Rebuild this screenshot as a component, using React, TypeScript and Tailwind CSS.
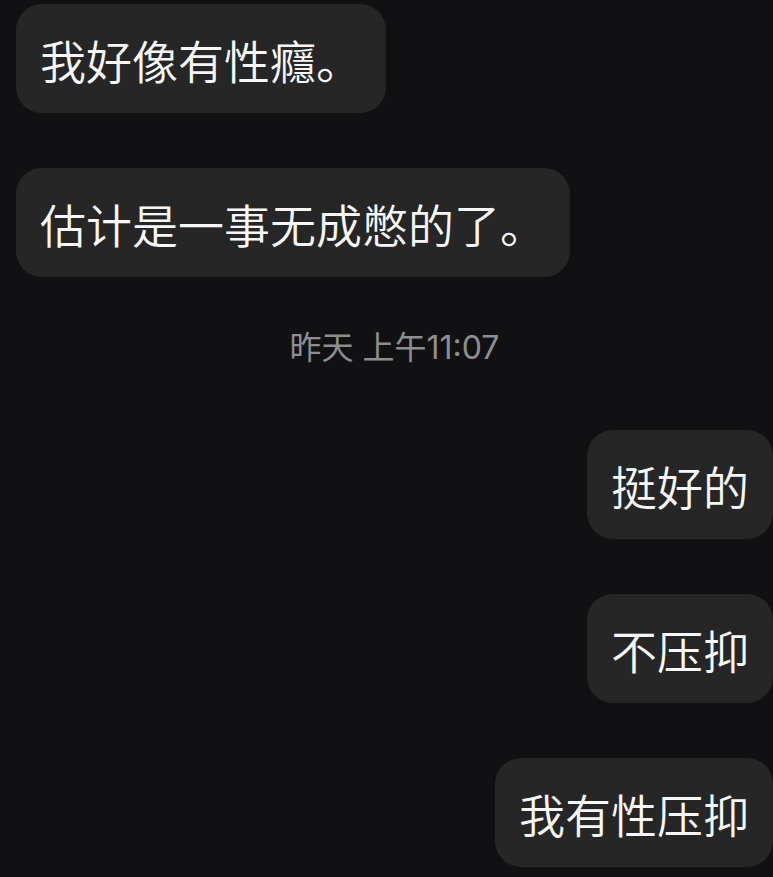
const font = "font-['Noto_Sans_CJK_SC','Noto_Sans',sans-serif]"

type Msg = { text: string; mine?: boolean }

const before: Msg[] = [
  { text: '我好像有性癮。' },
  { text: '估计是一事无成憋的了。' },
]

const after: Msg[] = [
  { text: '挺好的', mine: true },
  { text: '不压抑', mine: true },
  { text: '我有性压抑', mine: true },
]

function Bubble({ msg }: { msg: Msg }) {
  return (
    <div className={msg.mine ? 'flex justify-end' : 'flex justify-start'}>
      <div className="rounded-[26px] bg-[#262626] px-6 pt-[25px] pb-[23px] text-[46px] font-[350] leading-[61px] text-[#f7f7f7] whitespace-nowrap">
        {msg.text}
      </div>
    </div>
  )
}

export default function App() {
  return (
    <div className={`min-h-[877px] w-[773px] overflow-hidden bg-[#111113] ${font}`}>
      <div className="flex flex-col pl-4 pt-1">
        <div className="flex flex-col gap-[55px]">
          {before.map((m, i) => (
            <Bubble key={i} msg={m} />
          ))}
        </div>

        {/* timestamp */}
        <div className="mt-[51px] mb-[62px] text-center font-['Inter','Noto_Sans_CJK_SC',sans-serif] text-[32px] leading-[40px] text-[#8e8e92]">
          昨天 上午11:07
        </div>

        <div className="flex flex-col gap-[55px]">
          {after.map((m, i) => (
            <Bubble key={i} msg={m} />
          ))}
        </div>
      </div>
    </div>
  )
}
